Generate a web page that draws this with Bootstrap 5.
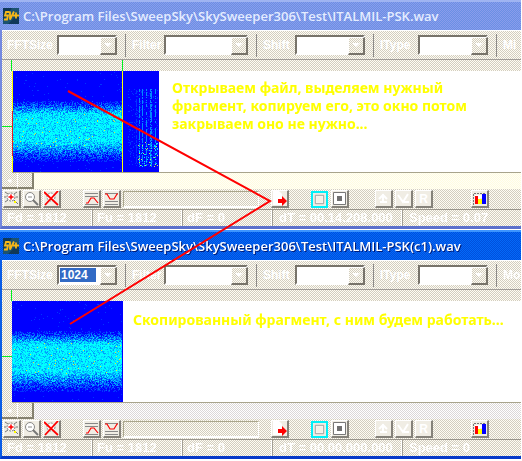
<!DOCTYPE html>
<html lang="ru">
<head>
<meta charset="utf-8">
<meta name="viewport" content="width=device-width, initial-scale=1">
<title>SkySweeper</title>
<link rel="stylesheet" href="https://cdn.jsdelivr.net/npm/bootstrap@5.3.0/dist/css/bootstrap.min.css">
<style>
body{background:#fff;font-family:"Liberation Sans",Arial,sans-serif;font-size:12px;line-height:16px;overflow:hidden}
.desk{padding-right:1px}
.win{--edge:#7388e0;border-left:2px solid var(--edge);border-bottom:3px solid #5c70cc;margin-bottom:1px}
.win.front{--edge:#0a5ce6;border-bottom-color:#0638c8}
.dither,.keys,.tools{background:repeating-conic-gradient(#d2cdc0 0 25%,#fffdf4 0 50%) 0 0/2px 2px}
.caption{height:30px;margin-left:-2px;padding:0 4px 0 3px;background:repeating-conic-gradient(#6a90e4 0 25%,#8a9cec 0 50%) 0 0/2px 2px;color:#e4ecff;border-top:2px solid #9fb4f2}
.front .caption{background:repeating-conic-gradient(#0050dc 0 25%,#0468f8 0 50%) 0 0/2px 2px;color:#fff;text-shadow:1px 1px #001c78;border-top-color:#3c94ff}
.caption h1{font:600 13px/18px "Open Sans","Noto Sans",sans-serif;margin:0;white-space:nowrap}
.caption svg{width:16px;height:16px;flex:none}
.tools{height:30px;padding-left:5px;border-bottom:1px solid #a09c98;border-top:1px solid #fff;color:#fff;font-weight:700;font-size:12px;white-space:nowrap;overflow:hidden}
.field{display:flex;align-items:center;flex:none;height:23px;padding-right:8px;margin-right:6px;border-right:1px solid #8c8a88}
.field:last-child{border:0}
.pick{display:grid;height:20px}
.pick>*{grid-area:1/1}
.pick select{appearance:none;width:100%;height:20px;border:2px solid #77736a;border-right-color:#fff;border-bottom-color:#fff;border-radius:0;background:#fff;padding:0 2px;color:#fff;font:700 12px/16px "Liberation Sans",sans-serif}
.pick select.chosen{background:linear-gradient(#316ac5,#316ac5) 1px 1px/36px 14px no-repeat #fff}
.drop{justify-self:end;width:17px;height:18px;margin:2px 0 0;border:1px solid #fff;border-right:2px solid #77736a;border-bottom:2px solid #77736a;pointer-events:none}
.drop::after{content:"";display:block;margin:5px 3px;border:4px solid transparent;border-top-color:#fff;border-bottom:0}
.w60{width:60px}.w70{width:70px}.w84{width:84px}
.l50{width:50px}.l32{width:32px}.l38{width:38px}
.ruler{height:11px;padding-left:9px}
.ruler i{width:1px;background:#00f020}
.ruler .mid{margin-left:110px}
.gut{width:10px;flex:none}
.gut hr{width:100%;margin:55px 0 0;border:0;height:1px;background:#00f020;opacity:1}
.plot{background:#fff;border-bottom:1px solid #a8a48c}
.plot canvas{display:block;flex:none}
.note{font:700 14px/18px "Noto Sans","Open Sans",sans-serif;color:#ff0;margin:8px 0 0 13px;max-width:320px}
.front .note{max-width:none;margin:10px 0 0 10px;white-space:nowrap}
.slide{height:16px;background:repeating-conic-gradient(#fffbe0 0 25%,#fffff6 0 50%) 0 0/2px 2px}
.front .slide{background:repeating-conic-gradient(#dcd8d8 0 25%,#fff 0 50%) 0 0/2px 2px}
.slide button{width:16px;height:16px;padding:0;border:0;border-right:1px solid #fff;border-bottom:2px solid #85816e;color:#fff;font-size:9px;line-height:12px}
.slide button+button{border-right:2px solid #85816e}
.keys{height:20px;padding-left:1px;gap:2px}
.keys button{width:18px;height:18px;padding:0;flex:none;border:1px solid #fff;border-right:2px solid #85827a;border-bottom:2px solid #85827a;background:#f0ede4;line-height:0}
.keys button svg{width:15px;height:15px;display:block}
.keys .cyan{width:17px;height:17px;margin-right:1px;border:2px solid #00f0f8}
.keys .cyan svg{width:13px;height:13px}
.keys input{width:136px;height:17px;border:1px solid #aaa68c;border-right-color:#fff;border-bottom:2px solid #fff;border-radius:0;background:transparent;padding:0}
.sp10{margin-left:10px}.sp20{margin-left:20px}.sp24{margin-left:24px}.sp38{margin-left:36px}
.status{height:17px;border-top:1px solid #99958c;color:#fff;font-weight:700;font-size:13px;white-space:nowrap;overflow:hidden}
.status span{width:90px;flex:none;padding-left:5px;border-right:1px solid #fff;box-shadow:1px 0 #a39f94}
.status .wide{width:130px;padding-left:7px}
.status .rest{flex:1 1 0;border:0;box-shadow:none;padding-left:7px}
.links{left:0;top:0;pointer-events:none}
</style>
</head>
<body>
<svg class="d-none">
<defs>
<symbol id="logo" viewBox="0 0 16 16"><path fill="#103858" d="M0 0h16v16H0z"/><path d="M0 12L9 0h7v5L5 16H0z" fill="#1c5270"/><g fill="none" stroke="#f8b818" stroke-width="1.8"><path d="M6.500 4H3L2 7.500h3L4 11.500H1M7 3.500v8l4-8M10 7.500h6M13 4.500v6"/></g></symbol>
<symbol id="zin" viewBox="0 0 15 15"><circle cx="7" cy="6" r="4" fill="#fff" stroke="#777" stroke-dasharray="2 1"/><path d="M1 1l3 2M13 1l-3 2M1 11l3-2M0 6h2M12 6h2M10 9l4 4" stroke="#777"/><path d="M4.500 6h5M7 3.500v5" stroke="#f00" stroke-width="1.5"/><path d="M10 10h2v2h-2z" fill="#ff0"/></symbol>
<symbol id="zout" viewBox="0 0 15 15"><circle cx="6" cy="6" r="4.500" fill="#fff" stroke="#888"/><path d="M4 6h4" stroke="#888"/><path d="M9 9l5 5" stroke="#777" stroke-width="2"/></symbol>
<symbol id="zoff" viewBox="0 0 15 15"><circle cx="7" cy="6" r="4" fill="#fff" stroke="#888" stroke-dasharray="2 1"/><path d="M0 1l14 13M14 0L1 14" stroke="#f00" stroke-width="1.8"/></symbol>
<symbol id="hill" viewBox="0 0 15 15"><path d="M1 2.500h13M1 5.500h13M1 13.500h13" stroke="#888" shape-rendering="crispEdges"/><path d="M2 12h2l3-5h3l4 5" fill="none" stroke="#f00" stroke-width="1.2"/></symbol>
<symbol id="dale" viewBox="0 0 15 15"><path d="M1 2.500h13M1 10.500h13M1 13.500h13" stroke="#888" shape-rendering="crispEdges"/><path d="M1 3h2l3 5h4l3-5h1" fill="none" stroke="#f00" stroke-width="1.2"/></symbol>
<symbol id="go" viewBox="0 0 15 15"><path d="M1 0h6l3 3v11H1z" fill="#fff"/><path d="M6 8h4V5l5 5-5 5v-3H6z" fill="#f00"/></symbol>
<symbol id="box" viewBox="0 0 14 14"><path d="M3 3h8v8H3z" fill="#f4f0e6" stroke="#fff"/><path d="M2.500 2.500h9v9h-9z" fill="none" stroke="#999"/></symbol>
<symbol id="stop" viewBox="0 0 15 15"><path d="M1.500 1.500h12v12h-12z" fill="#fff" stroke="#777"/><path d="M5 5h5v5H5z" fill="#707070"/></symbol>
<symbol id="up" viewBox="0 0 15 15"><path d="M7 3v9M3 8l4-4 4 4M4 11h7" stroke="#fff" stroke-width="2" fill="none"/></symbol>
<symbol id="zig" viewBox="0 0 15 15"><path d="M2 4l5 7 5-8M8 11h5" stroke="#fff" stroke-width="2" fill="none"/></symbol>
<symbol id="bars" viewBox="0 0 15 15"><path d="M1.500 14V2.500H14" fill="none" stroke="#777" stroke-dasharray="2 1"/><path d="M3 4h9v3H8v3H3z" fill="#fff"/><path d="M3 5h3v8H3z" fill="#f00"/><path d="M6 8h4v5H6z" fill="#ff0"/><path d="M10 3h4v10h-4z" fill="#00f"/></symbol>
</defs></svg>

<main class="desk position-relative">
<section class="win">
  <header class="caption d-flex align-items-center gap-1"><svg><use href="#logo"/></svg><h1>C:\Program Files\SweepSky\SkySweeper306\Test\ITALMIL-PSK.wav</h1></header>
  <div class="tools d-flex align-items-center">
    <div class="field"><label class="l50" for="a1">FFTSize</label><div class="pick w60"><select id="a1"><option></option></select><span class="drop dither"></span></div></div>
    <div class="field"><label class="l32" for="a2">Filter</label><div class="pick w84"><select id="a2"><option></option></select><span class="drop dither"></span></div></div>
    <div class="field"><label class="l32" for="a3">Shift</label><div class="pick w70"><select id="a3"><option></option></select><span class="drop dither"></span></div></div>
    <div class="field"><label class="l38" for="a4">IType</label><div class="pick w70"><select id="a4"><option></option></select><span class="drop dither"></span></div></div>
    <div class="field"><span>Mi</span></div>
  </div>
  <div class="ruler dither d-flex"><i></i><i class="mid"></i></div>
  <div class="d-flex dither">
    <div class="gut"><hr></div>
    <div class="plot d-flex flex-fill"><canvas id="wave1" width="147" height="101"></canvas><p class="note">Открываем файл, выделяем нужный фрагмент, копируем его, это окно потом закрываем оно не нужно...</p></div>
  </div>
  <div class="slide d-flex"><button class="dither" aria-label="Left">◂</button><button class="dither" aria-label="Thumb"></button></div>
  <div class="keys d-flex align-items-center">
    <button aria-label="Zoom in"><svg><use href="#zin"/></svg></button><button aria-label="Zoom out"><svg><use href="#zout"/></svg></button><button aria-label="Zoom off"><svg><use href="#zoff"/></svg></button>
    <button class="sp20" aria-label="Peak"><svg><use href="#hill"/></svg></button><button aria-label="Valley"><svg><use href="#dale"/></svg></button><input aria-label="Value">
    <button class="sp10" aria-label="Copy fragment"><svg><use href="#go"/></svg></button>
    <button class="sp20 cyan" aria-label="Play"><svg><use href="#box"/></svg></button><button aria-label="Stop"><svg><use href="#stop"/></svg></button>
    <button class="sp24 dither" aria-label="Up"><svg><use href="#up"/></svg></button><button class="dither" aria-label="Signal"><svg><use href="#zig"/></svg></button><button class="dither text-white fw-bold">R</button>
    <button class="sp38" aria-label="Spectrum"><svg><use href="#bars"/></svg></button>
  </div>
  <div class="status dither d-flex"><span>Fd = 1812</span><span>Fu = 1812</span><span>dF = 0</span><span class="wide">dT = 00.14.208.000</span><span class="rest">Speed = 0.07</span></div>
</section>

<section class="win front">
  <header class="caption d-flex align-items-center gap-1"><svg><use href="#logo"/></svg><h1>C:\Program Files\SweepSky\SkySweeper306\Test\ITALMIL-PSK(c1).wav</h1></header>
  <div class="tools d-flex align-items-center">
    <div class="field"><label class="l50" for="b1">FFTSize</label><div class="pick w60"><select id="b1" class="chosen"><option>1024</option></select><span class="drop dither"></span></div></div>
    <div class="field"><label class="l32" for="b2">Filter</label><div class="pick w84"><select id="b2"><option></option></select><span class="drop dither"></span></div></div>
    <div class="field"><label class="l32" for="b3">Shift</label><div class="pick w70"><select id="b3"><option></option></select><span class="drop dither"></span></div></div>
    <div class="field"><label class="l38" for="b4">IType</label><div class="pick w70"><select id="b4"><option></option></select><span class="drop dither"></span></div></div>
    <div class="field"><span>Mo</span></div>
  </div>
  <div class="ruler dither d-flex"><i></i></div>
  <div class="d-flex dither">
    <div class="gut"><hr></div>
    <div class="plot d-flex flex-fill"><canvas id="wave2" width="111" height="101"></canvas><p class="note">Скопированный фрагмент, с ним будем работать...</p></div>
  </div>
  <div class="slide d-flex"><button class="dither" aria-label="Left">◂</button><button class="dither" aria-label="Thumb"></button></div>
  <div class="keys d-flex align-items-center">
    <button aria-label="Zoom in"><svg><use href="#zin"/></svg></button><button aria-label="Zoom out"><svg><use href="#zout"/></svg></button><button aria-label="Zoom off"><svg><use href="#zoff"/></svg></button>
    <button class="sp20" aria-label="Peak"><svg><use href="#hill"/></svg></button><button aria-label="Valley"><svg><use href="#dale"/></svg></button><input aria-label="Value">
    <button class="sp10" aria-label="Copy fragment"><svg><use href="#go"/></svg></button>
    <button class="sp20 cyan" aria-label="Play"><svg><use href="#box"/></svg></button><button aria-label="Stop"><svg><use href="#stop"/></svg></button>
    <button class="sp24 dither" aria-label="Up"><svg><use href="#up"/></svg></button><button class="dither" aria-label="Signal"><svg><use href="#zig"/></svg></button><button class="dither text-white fw-bold">R</button>
    <button class="sp38" aria-label="Spectrum"><svg><use href="#bars"/></svg></button>
  </div>
  <div class="status dither d-flex"><span>Fd = 1812</span><span>Fu = 1812</span><span>dF = 0</span><span class="wide">dT = 00.00.000.000</span><span class="rest">Speed = 0</span></div>
</section>
<svg class="links position-absolute" width="522" height="461" viewBox="0 0 522 461"><path d="M68 91L270 201L70 324" fill="none" stroke="#f00" stroke-width="2"/></svg>
</main>
<script src="https://cdn.jsdelivr.net/npm/bootstrap@5.3.0/dist/js/bootstrap.bundle.min.js"></script>
<script>
// Noise spectrogram: a broad bright band, then voice-like streaks after the marker.
function paint(id, seed) {
  const c = document.getElementById(id), g = c.getContext('2d');
  const rnd = () => (seed = (seed * 16807) % 2147483647) / 2147483647;
  const shades = ['#0000ff', '#0034ff', '#0068ff', '#00a0ff', '#00d8ff', '#00ffff'];
  const dot = (x, y, s) => { g.fillStyle = s; g.fillRect(x, y, 1, 1); };
  g.fillStyle = shades[0]; g.fillRect(0, 0, c.width, c.height);
  for (let y = 0; y < 101; y++) for (let x = 0; x < 110; x++) {
    const lvl = Math.min(1, Math.max(0, Math.min((y - 29) / 15, (91 - y) / 22)));
    let k = lvl > 0 ? Math.floor(lvl * 5.2 + (rnd() - .5) * 3.6) : (rnd() < .015 ? 1 : 0);
    k = Math.max(0, Math.min(5, k));
    if (k) dot(x, y, shades[k]);
    if (lvl > .7 && rnd() < .012) dot(x, y, '#d8f040');
  }
  if (c.width > 120) {
    g.fillStyle = '#ffff00'; g.fillRect(0, 0, 1, 101); g.fillRect(110, 0, 1, 101);
    g.fillStyle = '#e02020'; g.fillRect(0, 40, 1, 45);
    for (let x = 116; x < 146; x++) {
      const line = [124, 127, 130, 134, 138, 139, 143].includes(x);
      for (let y = 18; y < 96; y++) {
        const low = y > 70 && x > 125;
        if (rnd() < (line ? (low ? .75 : .75) : (low ? .3 : .12)))
          dot(x, y, low && rnd() < .3 ? (rnd() < .25 ? '#c0f060' : '#00e0ff') : (line && x > 126 ? '#0088ff' : '#0034ff'));
      }
    }
  }
}
paint('wave1', 4211); paint('wave2', 977);
</script>
</body>
</html>
